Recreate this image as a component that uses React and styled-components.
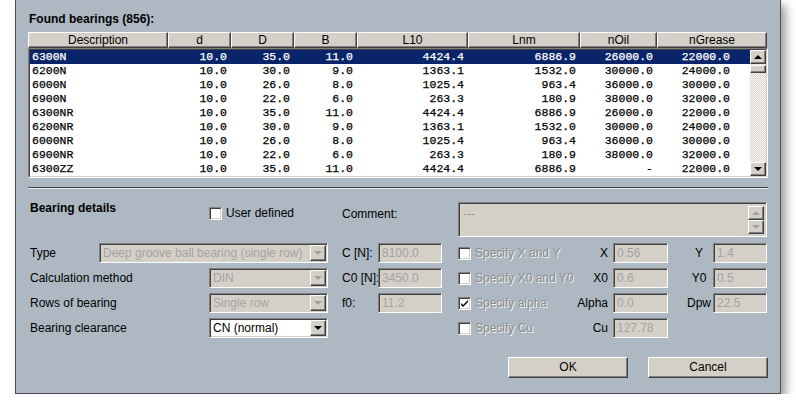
import React from 'react';
import styled, { createGlobalStyle, css } from 'styled-components';

const GlobalStyle = createGlobalStyle`
  html, body { margin: 0; padding: 0; background: #ffffff; }
  body { font-family: "Liberation Sans", Arial, sans-serif; font-size: 12px; color: #000; overflow: hidden; }
`;

const raised = css`
  border: 1px solid;
  border-color: #ffffff #404040 #404040 #ffffff;
  box-shadow: inset -1px -1px 0 #808080;
`;

const sunken = css`
  border: 1px solid;
  border-color: #808080 #ffffff #ffffff #808080;
  box-shadow: inset 1px 1px 0 #404040, inset -1px -1px 0 #d4d0c8;
`;

const Window = styled.div`
  box-sizing: border-box;
  margin-left: 15px;
  width: 766px;
  height: 394px;
  background: #adb8c3;
  border: 1px solid #4a4f55;
  border-top: none;
  box-shadow: 5px 5px 9px rgba(0, 0, 0, 0.38);
  padding: 12px 12px 0 12px;
  display: flex;
  flex-direction: column;
`;

const Title = styled.div`
  font-weight: bold;
  line-height: 14px;
  padding-left: 1px;
  margin-bottom: 6px;
`;

const HeadRow = styled.div`
  display: grid;
  grid-template-columns: 140px 63px 63px 63px 111px 112px 77px 110px;
  height: 16px;
`;

const HeadCell = styled.div`
  box-sizing: border-box;
  background: #d4d0c8;
  ${raised};
  text-align: center;
  line-height: 14px;
  white-space: nowrap;
`;

const BodyFrame = styled.div`
  box-sizing: border-box;
  height: 130px;
  border: 1px solid;
  border-color: #808080 #ffffff #ffffff #808080;
  display: flex;
`;

const BodyInner = styled.div`
  flex: 1;
  display: flex;
  border: 1px solid;
  border-color: #404040 #d4d0c8 #d4d0c8 #404040;
  background: #ffffff;
  overflow: hidden;
`;

const Rows = styled.div`
  flex: 1;
  display: flex;
  flex-direction: column;
`;

const DataRow = styled.div`
  display: grid;
  grid-template-columns: 138px 63px 63px 63px 111px 112px 77px 1fr;
  height: 14px;
  line-height: 14px;
  background: ${(p) => (p.$selected ? '#0a246a' : 'transparent')};
  color: ${(p) => (p.$selected ? '#ffffff' : '#000000')};
  font-family: "Liberation Mono", "Courier New", monospace;
  font-size: 11.5px;
  -webkit-text-stroke: 0.25px currentColor;
`;

const Cell = styled.div`
  white-space: nowrap;
  text-align: ${(p) => (p.$left ? 'left' : 'right')};
  padding-left: ${(p) => (p.$left ? '2px' : '0')};
  padding-right: ${(p) => (p.$left ? '0' : p.$last ? '20px' : '4px')};
`;

const ScrollBar = styled.div`
  width: 16px;
  display: flex;
  flex-direction: column;
  background: repeating-conic-gradient(#d4d0c8 0 25%, #ffffff 0 50%) 0 0 / 2px 2px;
`;

const ScrollBtn = styled.div`
  box-sizing: border-box;
  width: 16px;
  height: ${(p) => p.$h || 14}px;
  background: #d4d0c8;
  ${raised};
  display: flex;
  align-items: center;
  justify-content: center;
`;

const Thumb = styled.div`
  box-sizing: border-box;
  width: 16px;
  height: 8px;
  margin-top: 1px;
  background: #d4d0c8;
  ${raised};
`;

const Spacer = styled.div`
  flex: 1;
`;

const Arrow = styled.span`
  width: 0;
  height: 0;
  border-left: 4px solid transparent;
  border-right: 4px solid transparent;
  ${(p) =>
    p.$up
      ? css`border-bottom: 4px solid ${p.$dim ? '#a0a0a0' : '#000'};`
      : css`border-top: 4px solid ${p.$dim ? '#a0a0a0' : '#000'};`}
`;

const Separator = styled.div`
  margin-top: 9px;
  height: 0;
  border-top: 1px solid #404040;
  border-bottom: 1px solid #e6eaee;
`;

const Details = styled.div`
  display: grid;
  grid-template-columns: 71px 110px 119px 14px 36px 64px 16px 117px 38px 55px 45px 54px;
  grid-template-rows: 38px repeat(4, 20px);
  row-gap: 5px;
  margin-top: 11px;
`;

const SectionTitle = styled.div`
  grid-column: 1 / 3;
  font-weight: bold;
  line-height: 14px;
  padding-left: 2px;
  margin-top: 1px;
`;

const Label = styled.div`
  grid-column: ${(p) => p.$col};
  align-self: ${(p) => p.$align || 'center'};
  margin-top: ${(p) => p.$mt || 0}px;
  line-height: 14px;
  white-space: nowrap;
  padding-left: ${(p) => p.$pl ?? 2}px;
  padding-right: ${(p) => p.$pr || 0}px;
  text-align: ${(p) => p.$ta || 'left'};
`;

const Input = styled.div`
  grid-column: ${(p) => p.$col};
  box-sizing: border-box;
  height: 20px;
  background: #d4d0c8;
  ${sunken};
  color: #a3a3a3;
  line-height: 18px;
  padding-left: 3px;
  white-space: nowrap;
  overflow: hidden;
`;

const Select = styled.div`
  grid-column: ${(p) => p.$col};
  box-sizing: border-box;
  height: 20px;
  background: ${(p) => (p.$disabled ? '#d4d0c8' : '#ffffff')};
  ${sunken};
  padding: 1px;
  display: flex;
  color: ${(p) => (p.$disabled ? '#a3a3a3' : '#000000')};
`;

const SelectText = styled.div`
  flex: 1;
  line-height: 16px;
  padding-left: 2px;
  white-space: nowrap;
  overflow: hidden;
`;

const DropBtn = styled.div`
  box-sizing: border-box;
  width: 16px;
  height: 16px;
  background: #d4d0c8;
  ${raised};
  display: flex;
  align-items: center;
  justify-content: center;
`;

const CheckWrap = styled.label`
  grid-column: ${(p) => p.$col};
  align-self: ${(p) => p.$align || 'center'};
  margin-top: ${(p) => p.$mt || 0}px;
  display: flex;
  align-items: center;
  gap: 4px;
  white-space: nowrap;
  line-height: 14px;
`;

const Box = styled.span`
  box-sizing: border-box;
  width: 13px;
  height: 13px;
  background: #ffffff;
  ${sunken};
  display: flex;
  align-items: center;
  justify-content: center;
  flex: none;
`;

const CheckText = styled.span`
  color: ${(p) => (p.$disabled ? '#8c8c8c' : '#000000')};
  text-shadow: ${(p) => (p.$disabled ? '1px 1px 0 #f4f4f4' : 'none')};
`;

const Comment = styled.div`
  grid-column: 8 / 13;
  margin-top: 2px;
  height: 35px;
  box-sizing: border-box;
  background: #d4d0c8;
  ${sunken};
  padding: 2px;
  display: flex;
`;

const CommentText = styled.div`
  flex: 1;
  color: #9a9a9a;
  line-height: 14px;
  padding: 2px 0 0 2px;
`;

const CommentScroll = styled.div`
  display: flex;
  flex-direction: column;
  margin-top: 1px;
`;

const Buttons = styled.div`
  display: flex;
  justify-content: flex-end;
  gap: 20px;
  margin-top: 19px;
`;

const Button = styled.div`
  box-sizing: border-box;
  width: 120px;
  height: 21px;
  background: #d4d0c8;
  border: 1px solid;
  border-color: #ffffff #404040 #404040 #ffffff;
  box-shadow: inset -1px -1px 0 #808080;
  text-align: center;
  line-height: 19px;
`;

const columns = ['Description', 'd', 'D', 'B', 'L10', 'Lnm', 'nOil', 'nGrease'];

const rows = [
  ['6300N', '10.0', '35.0', '11.0', '4424.4', '6886.9', '26000.0', '22000.0'],
  ['6200N', '10.0', '30.0', '9.0', '1363.1', '1532.0', '30000.0', '24000.0'],
  ['6000N', '10.0', '26.0', '8.0', '1025.4', '963.4', '36000.0', '30000.0'],
  ['6900N', '10.0', '22.0', '6.0', '263.3', '180.9', '38000.0', '32000.0'],
  ['6300NR', '10.0', '35.0', '11.0', '4424.4', '6886.9', '26000.0', '22000.0'],
  ['6200NR', '10.0', '30.0', '9.0', '1363.1', '1532.0', '30000.0', '24000.0'],
  ['6000NR', '10.0', '26.0', '8.0', '1025.4', '963.4', '36000.0', '30000.0'],
  ['6900NR', '10.0', '22.0', '6.0', '263.3', '180.9', '38000.0', '32000.0'],
  ['6300ZZ', '10.0', '35.0', '11.0', '4424.4', '6886.9', '-', '22000.0'],
];

const Tick = () => (
  <svg width="9" height="9" viewBox="0 0 9 9">
    <path d="M1 4 L3 6 L8 1 L8 3 L3 8 L1 6 Z" fill="#000" />
  </svg>
);

const Check = ({ col, label, checked, disabled, align, mt }) => (
  <CheckWrap $col={col} $align={align} $mt={mt}>
    <Box>{checked && <Tick />}</Box>
    <CheckText $disabled={disabled}>{label}</CheckText>
  </CheckWrap>
);

const Drop = ({ col, value, disabled }) => (
  <Select $col={col} $disabled={disabled}>
    <SelectText>{value}</SelectText>
    <DropBtn>
      <Arrow $dim={disabled} />
    </DropBtn>
  </Select>
);

export default function App() {
  return (
    <>
      <GlobalStyle />
      <Window>
        <Title>Found bearings (856):</Title>
        <HeadRow>
          {columns.map((c) => (
            <HeadCell key={c}>{c}</HeadCell>
          ))}
        </HeadRow>
        <BodyFrame>
          <BodyInner>
            <Rows>
              {rows.map((r, i) => (
                <DataRow key={i} $selected={i === 0}>
                  {r.map((v, j) => (
                    <Cell key={j} $left={j === 0} $last={j === r.length - 1}>
                      {v}
                    </Cell>
                  ))}
                </DataRow>
              ))}
            </Rows>
            <ScrollBar>
              <ScrollBtn>
                <Arrow $up />
              </ScrollBtn>
              <Thumb />
              <Spacer />
              <ScrollBtn>
                <Arrow />
              </ScrollBtn>
            </ScrollBar>
          </BodyInner>
        </BodyFrame>
        <Separator />
        <Details>
          <SectionTitle>Bearing details</SectionTitle>
          <Check col="3 / 4" label="User defined" align="start" mt={6} />
          <Label $col="5 / 8" $align="start" $mt={7} $pl={0}>Comment:</Label>
          <Comment>
            <CommentText>---</CommentText>
            <CommentScroll>
              <ScrollBtn>
                <Arrow $up $dim />
              </ScrollBtn>
              <ScrollBtn>
                <Arrow $dim />
              </ScrollBtn>
            </CommentScroll>
          </Comment>

          <Label $col="1 / 2">Type</Label>
          <Drop col="2 / 4" value="Deep groove ball bearing (single row)" disabled />
          <Label $col="5 / 6" $pl={0}>C [N]:</Label>
          <Input $col="6 / 7">8100.0</Input>
          <Check col="8 / 9" label="Specify X and Y" disabled />
          <Label $col="9 / 10" $ta="right" $pr={5}>X</Label>
          <Input $col="10 / 11">0.56</Input>
          <Label $col="11 / 12" $ta="center" $pl={17}>Y</Label>
          <Input $col="12 / 13">1.4</Input>

          <Label $col="1 / 3">Calculation method</Label>
          <Drop col="3 / 4" value="DIN" disabled />
          <Label $col="5 / 6" $pl={0}>C0 [N]:</Label>
          <Input $col="6 / 7">3450.0</Input>
          <Check col="8 / 9" label="Specify X0 and Y0" disabled />
          <Label $col="9 / 10" $ta="right" $pr={5}>X0</Label>
          <Input $col="10 / 11">0.6</Input>
          <Label $col="11 / 12" $ta="center" $pl={17}>Y0</Label>
          <Input $col="12 / 13">0.5</Input>

          <Label $col="1 / 3">Rows of bearing</Label>
          <Drop col="3 / 4" value="Single row" disabled />
          <Label $col="5 / 6" $pl={0}>f0:</Label>
          <Input $col="6 / 7">11.2</Input>
          <Check col="8 / 9" label="Specify alpha" checked disabled />
          <Label $col="9 / 10" $ta="right" $pr={5}>Alpha</Label>
          <Input $col="10 / 11">0.0</Input>
          <Label $col="11 / 12" $ta="center" $pl={17}>Dpw</Label>
          <Input $col="12 / 13">22.5</Input>

          <Label $col="1 / 3">Bearing clearance</Label>
          <Drop col="3 / 4" value="CN (normal)" />
          <Check col="8 / 9" label="Specify Cu" disabled />
          <Label $col="9 / 10" $ta="right" $pr={5}>Cu</Label>
          <Input $col="10 / 11">127.78</Input>
        </Details>
        <Buttons>
          <Button>OK</Button>
          <Button>Cancel</Button>
        </Buttons>
      </Window>
    </>
  );
}
